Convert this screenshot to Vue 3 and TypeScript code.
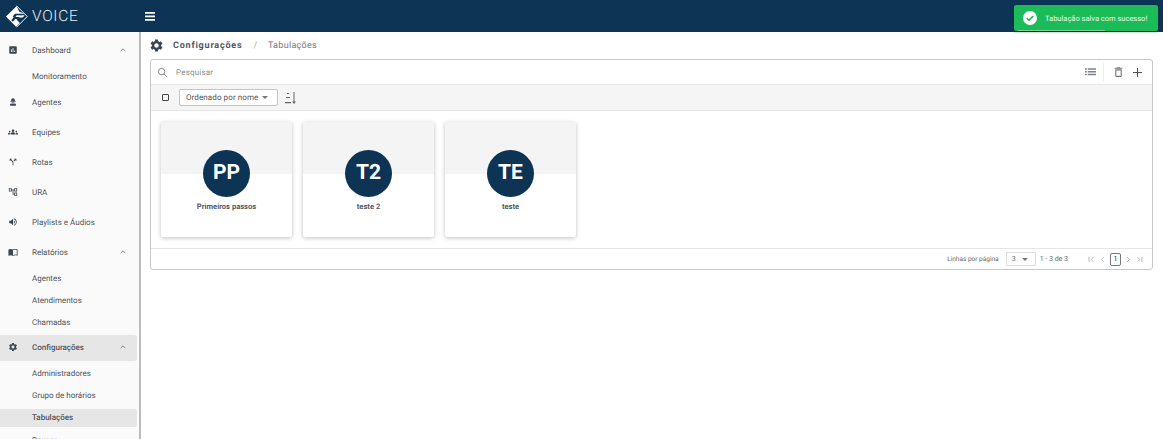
<script setup lang="ts">
interface MenuItem {
  label: string
  icon?: string
  open?: boolean
  active?: boolean
  children?: { label: string; active?: boolean }[]
}

const icons: Record<string, string> = {
  dashboard: 'M19 3H5c-1.1 0-2 .9-2 2v14c0 1.1.9 2 2 2h14c1.1 0 2-.9 2-2V5c0-1.100-.9-2-2-2zM9 17H7v-7h2v7zm4 0h-2V7h2v10zm4 0h-2v-4h2v4z',
  agent: 'M12 3a4.500 4.500 0 0 0-4.500 4.500V10h9V7.500A4.500 4.500 0 0 0 12 3zM5 10.500h14V12H5zM8 13h8v2H8zM5 16h14v5H5z',
  groups: 'M12 12.750c1.630 0 3.070.390 4.240.900 1.080.480 1.760 1.560 1.760 2.730V18H6v-1.610c0-1.180.680-2.260 1.760-2.730 1.170-.520 2.610-.910 4.240-.910zM4 13c1.100 0 2-.900 2-2s-.900-2-2-2-2 .900-2 2 .900 2 2 2zm1.130 1.100C4.760 14.040 4.390 14 4 14c-.990 0-1.930.210-2.780.580C.480 14.900 0 15.620 0 16.430V18h4.500v-1.610c0-.830.230-1.610.630-2.290zM20 13c1.100 0 2-.900 2-2s-.900-2-2-2-2 .900-2 2 .900 2 2 2zm4 3.430c0-.810-.480-1.530-1.220-1.850-.850-.370-1.790-.580-2.780-.580-.390 0-.760.040-1.130.100.400.680.630 1.460.630 2.290V18H24v-1.570zM12 6c1.660 0 3 1.340 3 3s-1.340 3-3 3-3-1.340-3-3 1.340-3 3-3z',
  routes: 'M14 4l2.290 2.290-2.880 2.880 1.420 1.420 2.880-2.880L20 10V4h-6zm-4 0H4v6l2.290-2.290 4.710 4.700V20h2v-8.410l-5.290-5.300L10 4z',
  ura: 'M22 11V3h-7v3H9V3H2v8h7V8h2v10h4v3h7v-8h-7v3h-2V8h2v3h7zM7 9H4V5h3v4zm10 6h3v4h-3v-4zm0-10h3v4h-3V5z',
  audio: 'M3 9v6h4l5 5V4L7 9H3zm13.500 3A4.500 4.500 0 0 0 14 7.970v8.050c1.480-.730 2.500-2.250 2.500-4.020zM14 3.230v2.060c2.890.860 5 3.540 5 6.710s-2.110 5.850-5 6.710v2.060c4.010-.910 7-4.490 7-8.770s-2.990-7.860-7-8.770z',
  book: 'M21 5c-1.110-.350-2.330-.500-3.500-.500-1.950 0-4.050.400-5.500 1.500-1.450-1.100-3.550-1.500-5.500-1.500S2.450 4.900 1 6v14.650c0 .250.250.500.500.500.100 0 .150-.050.250-.050C3.100 20.450 5.050 20 6.500 20c1.950 0 4.050.400 5.500 1.500 1.350-.850 3.800-1.500 5.500-1.500 1.650 0 3.350.300 4.750 1.050.100.050.150.050.250.050.250 0 .500-.250.500-.500V6c-.600-.450-1.250-.750-2-1zm0 13.500c-1.100-.350-2.300-.500-3.500-.500-1.700 0-4.150.650-5.500 1.500V8c1.350-.850 3.800-1.500 5.500-1.500 1.200 0 2.400.150 3.500.500v11.500z',
  settings: 'M19.140 12.940c.040-.300.060-.610.060-.940 0-.320-.020-.640-.070-.940l2.030-1.580a.49.49 0 0 0 .120-.610l-1.920-3.320a.488.488 0 0 0-.590-.220l-2.390.960c-.500-.380-1.030-.700-1.620-.940l-.360-2.540a.484.484 0 0 0-.480-.410h-3.840c-.240 0-.430.170-.470.410l-.360 2.540c-.590.240-1.130.570-1.620.940l-2.390-.960c-.220-.080-.470 0-.590.220L2.740 8.870c-.120.210-.080.470.120.610l2.030 1.580c-.050.300-.090.630-.090.940s.020.640.070.940l-2.030 1.580a.49.49 0 0 0-.120.610l1.920 3.320c.120.220.370.290.590.220l2.390-.960c.500.380 1.030.700 1.620.940l.360 2.540c.050.240.240.410.480.410h3.840c.240 0 .440-.170.470-.410l.360-2.540c.590-.240 1.130-.560 1.620-.940l2.390.960c.220.080.470 0 .590-.220l1.920-3.320c.120-.220.070-.470-.120-.610l-2.010-1.580zM12 15.600c-1.980 0-3.600-1.620-3.600-3.600s1.620-3.600 3.600-3.600 3.600 1.620 3.600 3.600-1.620 3.600-3.600 3.600z',
}

const menu: MenuItem[] = [
  { label: 'Dashboard', icon: 'dashboard', open: true, children: [{ label: 'Monitoramento' }] },
  { label: 'Agentes', icon: 'agent' },
  { label: 'Equipes', icon: 'groups' },
  { label: 'Rotas', icon: 'routes' },
  { label: 'URA', icon: 'ura' },
  { label: 'Playlists e Áudios', icon: 'audio' },
  {
    label: 'Relatórios',
    icon: 'book',
    open: true,
    children: [{ label: 'Agentes' }, { label: 'Atendimentos' }, { label: 'Chamadas' }],
  },
  {
    label: 'Configurações',
    icon: 'settings',
    open: true,
    active: true,
    children: [
      { label: 'Administradores' },
      { label: 'Grupo de horários' },
      { label: 'Tabulações', active: true },
      { label: 'Pausas' },
    ],
  },
]

const cards = [
  { initials: 'PP', name: 'Primeiros passos' },
  { initials: 'T2', name: 'teste 2' },
  { initials: 'TE', name: 'teste' },
]
</script>

<template>
  <div class="app">
    <header class="topbar">
      <div class="logo">
        <svg class="logo-mark" viewBox="0 0 24 24" width="23" height="23">
          <path fill="none" stroke="#fff" stroke-width="1" d="M12 .8 23.200 12 12 23.200" />
          <path fill="#fff" d="M12 1.200 1 12l10.500 10.800 4-4L12 15l2-2h4.500l2-2.200H15l5-2-5-1.800-3-6z" />
          <path fill="#0d3454" d="M10.500 9H19l-1.700 1.800h-5l-1.500 1.700h4.500L13 14.500h-2.300l-2.500 3-1.600-1.700 2.500-3-1-1z" />
        </svg>
        <span class="logo-text">VOICE</span>
      </div>
      <svg class="burger" viewBox="0 0 10 9" width="10" height="9">
        <path fill="#fff" d="M0 0h10v1.800H0zM0 3.500h10v1.800H0zM0 7h10v1.800H0z" />
      </svg>
    </header>

    <div class="body">
      <aside class="sidebar">
        <template v-for="item in menu" :key="item.label">
          <div class="menu-row" :class="{ active: item.active }">
            <svg class="menu-icon" viewBox="0 0 24 24" width="10" height="10">
              <path fill="#3d4650" :d="icons[item.icon!]" />
            </svg>
            <span class="menu-label">{{ item.label }}</span>
            <svg v-if="item.open" class="chevron" viewBox="0 0 10 6" width="6" height="4">
              <path fill="none" stroke="#555" stroke-width="1.100" d="M1 5l4-4 4 4" />
            </svg>
          </div>
          <template v-if="item.children">
            <div
              v-for="child in item.children"
              :key="child.label"
              class="sub-row"
              :class="{ active: child.active }"
            >
              {{ child.label }}
            </div>
          </template>
        </template>
      </aside>

      <main class="content">
        <div class="breadcrumb">
          <svg class="crumb-icon" viewBox="0 0 24 24" width="15" height="15">
            <path fill="#3d4650" :d="icons.settings" />
          </svg>
          <b class="crumb-main">Configurações</b>
          <span class="crumb-sep">/</span>
          <span class="crumb-sub">Tabulações</span>
        </div>

        <section class="panel">
          <div class="search-row">
            <svg viewBox="0 0 24 24" width="11" height="11">
              <path fill="none" stroke="#777" stroke-width="2" d="M10 3a7 7 0 1 0 0 14 7 7 0 0 0 0-14zM15 15l7 7" />
            </svg>
            <span class="search-text">Pesquisar</span>
            <div class="search-actions">
              <svg class="list-icon" viewBox="0 0 12 8" width="11" height="8">
                <path fill="#7a828c" d="M0 0h2v1.500H0zM3 0h9v1.500H3zM0 3h2v1.500H0zM3 3h9v1.500H3zM0 6h2v1.500H0zM3 6h9v1.500H3z" />
              </svg>
              <span class="divider"></span>
              <svg viewBox="0 0 24 24" width="13" height="14">
                <path fill="#777" d="M16 9v10H8V9h8m-1.500-6h-5l-1 1H5v2h14V4h-3.500l-1-1zM18 7H6v12c0 1.100.9 2 2 2h8c1.100 0 2-.9 2-2V7z" />
              </svg>
              <svg viewBox="0 0 10 10" width="9" height="9">
                <path fill="#555" d="M4.400 0h1.200v4.400H10v1.200H5.600V10H4.400V5.600H0V4.400h4.400z" />
              </svg>
            </div>
          </div>

          <div class="toolbar">
            <span class="checkbox"></span>
            <div class="sort-select">
              <span>Ordenado por nome</span>
              <i class="caret"></i>
            </div>
            <svg viewBox="0 0 12 12" width="12" height="12">
              <path fill="#666" d="M2 1h2v1H2zM1 5h4v1H1zM0 10h6v1.200H0zM8.500 0h1v9.500H11L9 12 7 9.500h1.500z" />
            </svg>
          </div>

          <div class="cards">
            <article v-for="card in cards" :key="card.name" class="card">
              <div class="card-top"></div>
              <div class="avatar">{{ card.initials }}</div>
              <div class="card-name">{{ card.name }}</div>
            </article>
          </div>

          <footer class="pager">
            <span class="pager-label">Linhas por página</span>
            <div class="page-size">
              <span>3</span>
              <i class="caret"></i>
            </div>
            <span class="range">1 - 3 de 3</span>
            <div class="page-nav">
              <svg viewBox="0 0 10 10" width="7" height="7"><path fill="none" stroke="#999" d="M1.500 1.500v7M8 1.500 4.500 5 8 8.500" /></svg>
              <svg viewBox="0 0 10 10" width="7" height="7"><path fill="none" stroke="#999" d="M7 1.500 3.500 5 7 8.500" /></svg>
              <span class="page-current">1</span>
              <svg viewBox="0 0 10 10" width="7" height="7"><path fill="none" stroke="#999" d="M3 1.500 6.500 5 3 8.500" /></svg>
              <svg viewBox="0 0 10 10" width="7" height="7"><path fill="none" stroke="#999" d="M8.500 1.500v7M2 1.500 5.500 5 2 8.500" /></svg>
            </div>
          </footer>
        </section>
      </main>
    </div>

    <div class="toast">
      <svg viewBox="0 0 14 14" width="14" height="14">
        <circle cx="7" cy="7" r="7" fill="#fff" />
        <path fill="none" stroke="#1cbb5a" stroke-width="1.600" d="M3.800 7.200 6 9.400l4.200-4.400" />
      </svg>
      <span>Tabulação salva com sucesso!</span>
      <i class="toast-progress"></i>
    </div>
  </div>
</template>

<style>
html,
body {
  margin: 0;
  overflow: hidden;
}
</style>

<style scoped>
.app {
  position: relative;
  width: 1163px;
  height: 439px;
  overflow: hidden;
  background: #fff;
  font-family: Roboto, "Liberation Sans", sans-serif;
  color: #50555d;
  text-rendering: geometricPrecision;
}

.topbar {
  height: 32px;
  background: #0d3454;
  display: flex;
  align-items: center;
}

.logo {
  width: 145px;
  display: flex;
  align-items: center;
  padding-left: 5px;
  box-sizing: border-box;
}

.logo-text {
  margin-left: 4px;
  color: #e8edf1;
  font-size: 15.500px;
  font-weight: 300;
  letter-spacing: 0.7px;
}

.body {
  display: flex;
  height: 407px;
}

.sidebar {
  width: 141px;
  flex: none;
  box-sizing: border-box;
  padding-top: 3px;
  background: #fafafa;
  border-right: 2px solid #bcbcbc;
  overflow: hidden;
}

.menu-row {
  height: 30px;
  display: flex;
  align-items: center;
  font-size: 8px;
  padding: 0 11px 0 8px;
  margin-right: 2px;
  box-sizing: border-box;
}

.menu-row.active {
  height: 26px;
  margin: 2px 2px 1px 0;
  padding-bottom: 2px;
  background: #e6e6e6;
  border-radius: 0 3px 3px 0;
  font-weight: 500;
}

.menu-icon {
  flex: none;
}

.menu-label {
  margin-left: 14px;
  flex: 1;
}

.sub-row {
  height: 22px;
  line-height: 23px;
  padding-left: 32px;
  font-size: 8px;
  box-sizing: border-box;
}

.sub-row.active {
  height: 18px;
  line-height: 18px;
  margin: 3px 2px 2px 0;
  background: #e6e6e6;
  border-radius: 0 3px 3px 0;
  font-weight: 500;
}

.content {
  flex: 1;
  padding: 0 10px 0 9px;
}

.breadcrumb {
  height: 27px;
  display: flex;
  align-items: center;
  font-size: 9px;
  letter-spacing: 0.8px;
}

.crumb-icon {
  margin-left: -1px;
}

.crumb-main {
  margin-left: 9px;
  font-weight: 700;
}

.crumb-sep {
  margin-left: 11px;
  color: #aaa;
}

.crumb-sub {
  margin-left: 10px;
  color: #777;
  letter-spacing: 0.3px;
}

.panel {
  height: 211px;
  box-sizing: border-box;
  border: 1px solid #c8c8c8;
  border-radius: 3px;
  display: flex;
  flex-direction: column;
}

.search-row {
  height: 24px;
  flex: none;
  display: flex;
  align-items: center;
  padding: 0 10px 0 6px;
  font-size: 8px;
  color: #8a8a8a;
}

.search-text {
  margin-left: 8px;
  letter-spacing: 0.2px;
}

.search-actions {
  margin-left: auto;
  display: flex;
  align-items: center;
  gap: 8px;
}

.list-icon {
  margin-right: -1px;
}

.divider {
  width: 1px;
  height: 18px;
  background: #eee;
}

.toolbar {
  height: 27px;
  flex: none;
  box-sizing: border-box;
  display: flex;
  align-items: center;
  padding-left: 11px;
  background: #f5f5f5;
  border-top: 1px solid #e6e6e6;
  border-bottom: 1px solid #e6e6e6;
}

.checkbox {
  width: 5px;
  height: 5px;
  border: 1px solid #444;
  border-radius: 1px;
}

.sort-select {
  margin-left: 10px;
  margin-right: 7px;
  width: 99px;
  height: 17px;
  box-sizing: border-box;
  display: flex;
  align-items: center;
  justify-content: space-between;
  padding: 0 9px 0 6px;
  background: #fff;
  border: 1px solid #c4c4c4;
  border-radius: 2px;
  font-size: 8px;
  letter-spacing: 0.1px;
  color: #555;
}

.caret {
  width: 0;
  height: 0;
  border-left: 3px solid transparent;
  border-right: 3px solid transparent;
  border-top: 3px solid #777;
}

.cards {
  flex: 1;
  display: flex;
  gap: 11px;
  padding: 11px 10px 0;
}

.card {
  position: relative;
  width: 131px;
  height: 115px;
  background: #fff;
  border-radius: 2px;
  box-shadow: 0 1px 4px rgba(0, 0, 0, 0.25);
  display: flex;
  flex-direction: column;
  align-items: center;
}

.card-top {
  width: 100%;
  height: 52px;
  background: #f4f4f4;
  border-radius: 2px 2px 0 0;
}

.avatar {
  width: 47px;
  height: 47px;
  margin-top: -24px;
  border-radius: 50%;
  background: #0d3454;
  color: #fff;
  font-size: 21px;
  font-weight: 700;
  line-height: 47px;
  text-align: center;
}

.card-name {
  margin-top: 5px;
  font-size: 7.600px;
  font-weight: 700;
  color: #555b63;
}

.pager {
  height: 21px;
  flex: none;
  box-sizing: border-box;
  display: flex;
  align-items: center;
  justify-content: flex-end;
  padding-right: 9px;
  border-top: 1px solid #e6e6e6;
  font-size: 7px;
  color: #666;
}

.pager-label {
  font-size: 6.500px;
}

.page-size {
  width: 30px;
  height: 14px;
  margin-left: 7px;
  box-sizing: border-box;
  display: flex;
  align-items: center;
  justify-content: space-between;
  padding: 0 7px 0 5px;
  border: 1px solid #ddd;
  border-radius: 1px;
}

.range {
  margin-left: 4px;
}

.page-nav {
  display: flex;
  align-items: center;
  gap: 4px;
  margin-left: 20px;
}

.page-current {
  width: 9px;
  height: 11px;
  line-height: 11px;
  text-align: center;
  border: 1px solid #777;
  border-radius: 2px;
  color: #0d3454;
}

.toast {
  position: absolute;
  top: 5px;
  left: 1014px;
  width: 144px;
  height: 26px;
  box-sizing: border-box;
  padding-left: 9px;
  display: flex;
  align-items: center;
  gap: 8px;
  background: #1cbb5a;
  border-radius: 2px;
  box-shadow: 0 1px 3px rgba(0, 0, 0, 0.35);
  color: #e7f8ed;
  font-size: 7.500px;
}

.toast-progress {
  position: absolute;
  left: 4px;
  bottom: 0;
  width: 87px;
  height: 1px;
  background: #6fd896;
}
</style>
